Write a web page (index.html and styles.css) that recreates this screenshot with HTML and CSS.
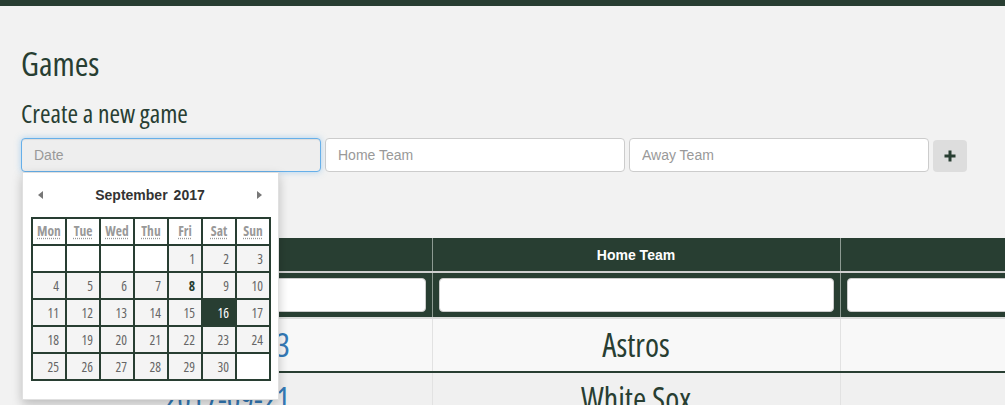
FILE: index.html
```html
<!DOCTYPE html>
<html>
<head>
<meta charset="utf-8">
<link rel="stylesheet" href="styles.css">
</head>
<body>
<div class="topbar"></div>
<div class="page">
  <h1 class="title">Games</h1>
  <h3 class="subtitle">Create a new game</h3>
  <div class="form-row">
    <div class="date-wrap">
      <input class="field field-date" placeholder="Date" readonly>
      <div class="datepicker">
        <div class="dp-head">
          <span class="dp-prev"></span>
          <span class="dp-title"><span>September</span><span>2017</span></span>
          <span class="dp-next"></span>
        </div>
        <table class="dp-table">
          <thead>
            <tr><th><abbr>Mon</abbr></th><th><abbr>Tue</abbr></th><th><abbr>Wed</abbr></th><th><abbr>Thu</abbr></th><th><abbr>Fri</abbr></th><th><abbr>Sat</abbr></th><th><abbr>Sun</abbr></th></tr>
          </thead>
          <tbody>
            <tr><td class="empty"></td><td class="empty"></td><td class="empty"></td><td class="empty"></td><td>1</td><td>2</td><td>3</td></tr>
            <tr><td>4</td><td>5</td><td>6</td><td>7</td><td class="today">8</td><td>9</td><td>10</td></tr>
            <tr><td>11</td><td>12</td><td>13</td><td>14</td><td>15</td><td class="selected">16</td><td>17</td></tr>
            <tr><td>18</td><td>19</td><td>20</td><td>21</td><td>22</td><td>23</td><td>24</td></tr>
            <tr><td>25</td><td>26</td><td>27</td><td>28</td><td>29</td><td>30</td><td class="empty"></td></tr>
          </tbody>
        </table>
      </div>
    </div>
    <input class="field" placeholder="Home Team">
    <input class="field" placeholder="Away Team">
    <button class="add-btn" type="button">
      <svg width="12" height="12" viewBox="0 0 12 12"><rect x="4.5" y="0.5" width="3" height="11" fill="#283e32"/><rect x="0.5" y="4.5" width="11" height="3" fill="#283e32"/></svg>
    </button>
  </div>

  <table class="games">
    <colgroup><col class="c1"><col class="c2"><col class="c3"><col class="c4"></colgroup>
    <thead>
      <tr class="head-row"><th>Date</th><th>Home Team</th><th>Away Team</th><th>Score</th></tr>
      <tr class="filter-row"><td><input class="filter"></td><td><input class="filter"></td><td><input class="filter"></td><td><input class="filter"></td></tr>
    </thead>
    <tbody>
      <tr class="row-a"><td><a href="#">2017-09-23</a></td><td>Astros</td><td>Rays</td><td>4 - 2</td></tr>
      <tr class="row-b"><td><a href="#">2017-09-21</a></td><td>White Sox</td><td>Indians</td><td>3 - 5</td></tr>
    </tbody>
  </table>
</div>
</body>
</html>
```
FILE: styles.css
```css
html, body {
  margin: 0;
  padding: 0;
  background: #f2f2f2;
  overflow: hidden;
  font-family: "Liberation Sans", Arial, sans-serif;
}
.topbar {
  height: 6px;
  background: #283e32;
}
.page {
  padding: 0 0 0 21px;
  width: 1700px;
}
.title, .subtitle, .dp-table, .games tbody td {
  font-family: "Open Sans", sans-serif;
  font-stretch: 75%;
}
.title {
  margin: 38px 0 0;
  font-weight: 500;
  font-size: 33px;
  line-height: 40px;
  color: #283e32;
}
.subtitle {
  margin: 14px 0 10px;
  font-weight: 500;
  font-size: 25.5px;
  line-height: 30px;
  color: #283e32;
}
.form-row {
  display: flex;
  gap: 4px;
  align-items: flex-start;
}
.date-wrap {
  position: relative;
}
.field {
  box-sizing: border-box;
  width: 300px;
  height: 34px;
  padding: 6px 12px;
  border: 1px solid #ccc;
  border-radius: 4px;
  background: #fff;
  font-family: "Liberation Sans", Arial, sans-serif;
  font-size: 14px;
  color: #555;
  outline: none;
  display: block;
}
.field::placeholder { color: #999; }
.field-date {
  background: #eee;
  border-color: #66afe9;
  box-shadow: inset 0 1px 1px rgba(0,0,0,.075), 0 0 6px rgba(102,175,233,.5);
}
.add-btn {
  margin-top: 2px;
  width: 34px;
  height: 32px;
  border: none;
  border-radius: 4px;
  background: #ddd;
  display: flex;
  align-items: center;
  justify-content: center;
  padding: 0;
}
.add-btn svg { display: block; }

/* datepicker */
.datepicker {
  position: absolute;
  left: 1px;
  top: 34px;
  width: 257px;
  box-sizing: border-box;
  padding: 0 9px 18px 8px;
  background: #fff;
  border: 1px solid rgba(0,0,0,.12);
  box-shadow: 0 4px 10px rgba(0,0,0,.22);
  z-index: 10;
}
.dp-head {
  height: 44px;
  display: flex;
  align-items: center;
  justify-content: space-between;
  padding: 0 7px 0 7px;
}
.dp-prev {
  width: 0; height: 0;
  border-top: 4.5px solid transparent;
  border-bottom: 4.5px solid transparent;
  border-right: 5px solid #777;
}
.dp-next {
  width: 0; height: 0;
  border-top: 4.5px solid transparent;
  border-bottom: 4.5px solid transparent;
  border-left: 5px solid #777;
}
.dp-title {
  display: flex;
  gap: 6px;
  font-weight: bold;
  font-size: 14px;
  color: #333;
}
.dp-table {
  border-collapse: collapse;
  table-layout: fixed;
  width: 240px;
}
.dp-table th, .dp-table td {
  border: 2px solid #283e32;
  width: 32px;
  height: 27px;
  padding: 0;
  box-sizing: border-box;
  font-size: 13.5px;
  line-height: 16px;
}
.dp-table th {
  background: #fff;
  color: #999;
  font-weight: 700;
  text-align: center;
  padding-bottom: 2px;
}
.dp-table th abbr {
  text-decoration: underline dotted;
  text-underline-offset: 2px;
}
.dp-table td {
  background: #f4f4f4;
  color: #666;
  font-weight: 500;
  text-align: right;
  padding-right: 6px;
}
.dp-table td.empty { background: #fff; }
.dp-table td.today { color: #283e32; font-weight: 700; }
.dp-table td.selected { background: #283e32; color: #fff; }

/* games table */
.games {
  margin-top: 66px;
  margin-left: 1px;
  border-collapse: collapse;
  table-layout: fixed;
  width: 1634px;
}
.games col.c1 { width: 410px; }
.games col.c2 { width: 408px; }
.games col.c3 { width: 408px; }
.games col.c4 { width: 408px; }
.head-row th {
  height: 34px;
  box-sizing: border-box;
  background: #283e32;
  color: #fff;
  font-size: 14px;
  font-weight: bold;
  border-left: 1px solid #8d9a92;
  border-bottom: 2px solid #cfcfcf;
  padding: 0;
}
.head-row th:first-child { border-left: none; }
.filter-row td {
  background: #283e32;
  padding: 5px 6px;
  border-left: 1px solid #8d9a92;
  border-bottom: 2px solid #dcdcdc;
}
.filter-row td:first-child { border-left: none; }
.filter {
  box-sizing: border-box;
  display: block;
  width: 100%;
  height: 34px;
  border: 1px solid #ccc;
  border-radius: 4px;
  background: #fff;
}
.games tbody td {
  height: 52px;
  text-align: center;
  font-weight: 500;
  font-size: 32px;
  line-height: 40px;
  color: #283e32;
  border-left: 1px solid #e2e2e2;
  padding: 0;
}
.games tbody td:first-child { border-left: none; }
.games tbody td a { color: #337ab7; text-decoration: none; }
.row-a td { background: #f8f8f8; border-bottom: 2px solid #283e32; }
.row-b td { background: #f0f0f0; }
```
